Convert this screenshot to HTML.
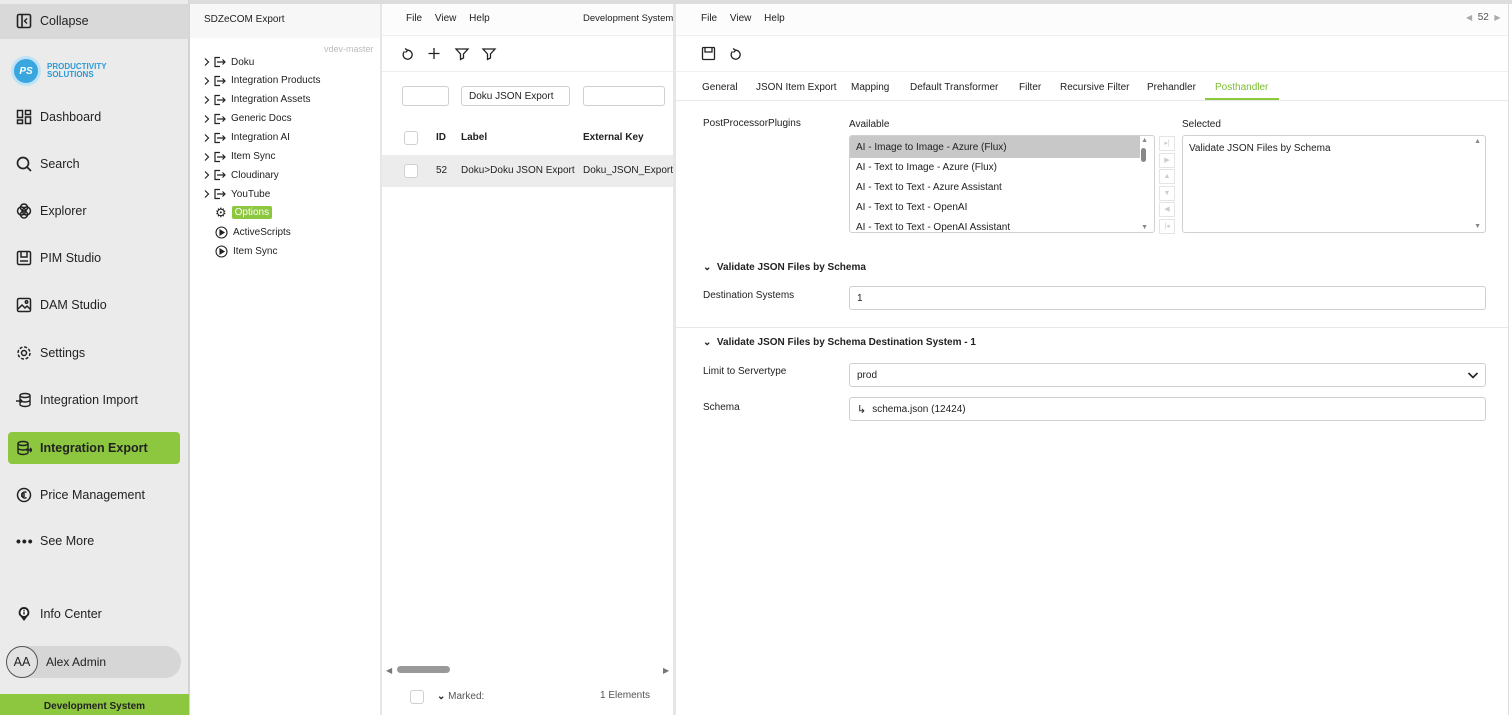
<!DOCTYPE html>
<html><head><meta charset="utf-8"><style>
*{box-sizing:border-box;margin:0;padding:0}
body{width:1512px;height:715px;overflow:hidden;background:#fff;font-family:"Liberation Sans",sans-serif;color:#222;position:relative;font-size:10px}
.abs{position:absolute}
#side{left:0;top:0;width:189px;height:715px;background:#ebebeb;border-right:1px solid #d4d4d4}
.nav{position:absolute;left:16px;font-size:12.5px;color:#222;display:flex;align-items:center;gap:8px}
.nav svg{width:16px;height:16px}
#tree{left:190px;top:0;width:190px;height:715px;background:#fff}
.sep{background:#e6e6e6}
.ti{position:absolute;left:204px;font-size:10px;display:flex;align-items:center;gap:5px}
.chk{position:absolute;width:14px;height:14px;border:1px solid #d0d0d0;border-radius:3px;background:#fff}
.inp{position:absolute;border:1px solid #cfcfcf;border-radius:3px;background:#fff;font-size:10px;padding-left:7px;display:flex;align-items:center}
.tab{position:absolute;top:82px;font-size:10px}
.lbl{position:absolute;left:703px;font-size:10px}
.mv div{height:15px;border:1px solid #e4e4e4;margin-bottom:1.6px}
</style></head><body>
<div class="abs" style="left:0;top:0;width:1512px;height:4px;background:#ddd"></div>
<div id="side" class="abs">
 <div class="abs" style="left:0;top:4px;width:189px;height:35px;background:#d9d9d9"></div>
 <div class="nav" style="top:13px"><svg viewBox="0 0 16 16"><rect x="1.5" y="1.5" width="13" height="13" rx="1.5" fill="none" stroke="#222" stroke-width="1.6"/><line x1="6" y1="2" x2="6" y2="14" stroke="#222" stroke-width="1.6"/><path d="M11 5.5 8.5 8 11 10.5" fill="none" stroke="#222" stroke-width="1.4"/></svg>Collapse</div>
 <div class="abs" style="left:11px;top:56px;width:30px;height:30px;border-radius:50%;background:#3aa6e0;border:3px solid #bfe3f6;color:#fff;font-weight:bold;font-style:italic;font-size:10px;display:flex;align-items:center;justify-content:center">PS</div>
 <div class="abs" style="left:47px;top:63px;color:#2a9ad8;font-weight:bold;font-size:8px;line-height:8px">PRODUCTIVITY<br>SOLUTIONS</div>
 <div class="nav" style="top:109px"><svg viewBox="0 0 16 16" fill="none" stroke="#222" stroke-width="1.5"><rect x="1.5" y="1.5" width="5" height="7"/><rect x="9.5" y="1.5" width="5" height="4"/><rect x="1.5" y="11" width="5" height="3.5"/><rect x="9.5" y="8" width="5" height="6.5"/></svg>Dashboard</div>
 <div class="nav" style="top:156px"><svg viewBox="0 0 16 16" fill="none" stroke="#222" stroke-width="1.7"><circle cx="7" cy="7" r="5.5"/><line x1="11" y1="11" x2="15" y2="15"/></svg>Search</div>
 <div class="nav" style="top:203px"><svg viewBox="0 0 16 16" fill="none" stroke="#222" stroke-width="1.5"><circle cx="5.5" cy="8" r="4"/><circle cx="10.5" cy="8" r="4"/><circle cx="8" cy="4.5" r="3.5"/><circle cx="8" cy="11.5" r="3.5"/></svg>Explorer</div>
 <div class="nav" style="top:250px"><svg viewBox="0 0 16 16" fill="none" stroke="#222" stroke-width="1.5"><rect x="1.5" y="1.5" width="13" height="13" rx="1.5"/><path d="M5 2v5h6V2M4 11h8"/></svg>PIM Studio</div>
 <div class="nav" style="top:297px"><svg viewBox="0 0 16 16" fill="none" stroke="#222" stroke-width="1.5"><rect x="1.5" y="1.5" width="13" height="13" rx="1.5"/><path d="M2 12l4-4 3 3 2-2 3 3"/><circle cx="10.5" cy="5" r="1.2"/></svg>DAM Studio</div>
 <div class="nav" style="top:345px"><svg viewBox="0 0 16 16" fill="none" stroke="#222" stroke-width="1.5"><circle cx="8" cy="8" r="2.5"/><circle cx="8" cy="8" r="6" stroke-dasharray="3 1.7"/></svg>Settings</div>
 <div class="nav" style="top:392px"><svg viewBox="0 0 16 16" fill="none" stroke="#222" stroke-width="1.4"><ellipse cx="9" cy="3.5" rx="5" ry="2"/><path d="M4 3.5v9c0 1 2.2 2 5 2s5-1 5-2v-9M4 8c0 1 2.2 2 5 2s5-1 5-2M0 9h6M4 7l2 2-2 2"/></svg>Integration Import</div>
 <div class="abs" style="left:8px;top:432px;width:172px;height:32px;background:#8dc63f;border-radius:4px"></div>
 <div class="nav" style="top:440px;font-weight:bold"><svg viewBox="0 0 16 16" fill="none" stroke="#222" stroke-width="1.4"><ellipse cx="7" cy="3.5" rx="5" ry="2"/><path d="M2 3.5v9c0 1 2.2 2 5 2s5-1 5-2v-9M2 8c0 1 2.2 2 5 2s5-1 5-2M10 10h6M14 8l2 2-2 2"/></svg>Integration Export</div>
 <div class="nav" style="top:487px"><svg viewBox="0 0 16 16" fill="none" stroke="#222" stroke-width="1.5"><circle cx="8" cy="8" r="6.5"/><path d="M10.5 5.5a3 3 0 1 0 0 5M5 7h4M5 9h4"/></svg>Price Management</div>
 <div class="nav" style="top:534px"><span style="width:16px;letter-spacing:1px;font-weight:bold;font-size:14px;line-height:10px">•••</span>See More</div>
 <div class="nav" style="top:606px"><svg viewBox="0 0 16 16"><path d="M8 1a5.5 5.5 0 0 0-3 10l3 4 3-4A5.5 5.5 0 0 0 8 1z" fill="#222"/><circle cx="8" cy="6.5" r="3.5" fill="#fff"/><rect x="7.3" y="5.5" width="1.4" height="3" fill="#222"/><rect x="7.3" y="3.8" width="1.4" height="1.1" fill="#222"/></svg>Info Center</div>
 <div class="abs" style="left:6px;top:646px;width:175px;height:32px;background:#d6d6d6;border-radius:16px"></div>
 <div class="abs" style="left:6px;top:646px;width:32px;height:32px;border-radius:50%;border:1px solid #555;background:#e2e2e2;font-size:12.5px;display:flex;align-items:center;justify-content:center">AA</div>
 <div class="abs" style="left:46px;top:655px;font-size:12px">Alex Admin</div>
 <div class="abs" style="left:0;top:694px;width:189px;height:21px;background:#8dc63f;font-weight:bold;font-size:10px;text-align:center;padding-top:7px">Development System</div>
</div>
<div class="abs" style="left:189px;top:4px;width:1px;height:711px;background:#d4d4d4"></div>
<div id="tree" class="abs" style="top:4px">
 <div class="abs" style="left:0;top:0;width:190px;height:34px;background:#f7f7f7"></div>
 <div class="abs" style="left:14px;top:10px;font-size:10px">SDZeCOM Export</div>
 <div class="abs" style="left:134px;top:40px;font-size:9px;color:#bbb">vdev-master</div>
</div>
<div id="treeitems"></div>
<div class="abs sep" style="left:380px;top:4px;width:2px;height:711px"></div>
<div class="abs sep" style="left:673px;top:4px;width:3px;height:711px"></div>
<div class="abs" style="left:1508px;top:4px;width:1px;height:711px;background:#ddd"></div>

<!-- middle -->
<div class="abs" style="left:382px;top:4px;width:291px;height:32px;background:#fcfcfc;border-bottom:1px solid #f0f0f0"></div>
<div class="abs" style="left:406px;top:13px;font-size:10px;word-spacing:10px">File View Help</div>
<div class="abs" style="left:583px;top:13px;font-size:9.5px">Development System</div>
<div class="abs" style="left:382px;top:71px;width:291px;height:1px;background:#eee"></div>
<svg class="abs" style="left:401px;top:47px" width="100" height="14" fill="none" stroke="#222" stroke-width="1.3"><path d="M3.5 4.5a4.5 4.5 0 1 0 3-1.3" /><path d="M4 1.5 6.7 3.2 4.5 5.5"/><path d="M33 1v11M27.5 6.5h11"/><path d="M55 2h12l-4.5 5v4l-3 1.5V7z"/><path d="M82 2h12l-4.5 5v4l-3 1.5V7z"/></svg>
<div class="inp" style="left:402px;top:86px;width:47px;height:20px"></div>
<div class="inp" style="left:461px;top:86px;width:109px;height:20px">Doku JSON Export</div>
<div class="inp" style="left:583px;top:86px;width:82px;height:20px"></div>
<div class="chk" style="left:404px;top:131px"></div>
<div class="abs" style="left:436px;top:132px;font-size:10px;font-weight:bold">ID</div>
<div class="abs" style="left:461px;top:132px;font-size:10px;font-weight:bold">Label</div>
<div class="abs" style="left:583px;top:132px;font-size:10px;font-weight:bold">External Key</div>
<div class="abs" style="left:382px;top:155px;width:291px;height:32px;background:#ececec"></div>
<div class="chk" style="left:404px;top:164px"></div>
<div class="abs" style="left:436px;top:165px;font-size:10px">52</div>
<div class="abs" style="left:461px;top:165px;font-size:10px">Doku&gt;Doku JSON Export</div>
<div class="abs" style="left:583px;top:165px;font-size:10px">Doku_JSON_Export</div>
<div class="abs" style="left:386px;top:666px;font-size:8px;color:#777">◀</div>
<div class="abs" style="left:397px;top:666px;width:53px;height:7px;background:#999;border-radius:4px"></div>
<div class="abs" style="left:663px;top:666px;font-size:8px;color:#777">▶</div>
<div class="chk" style="left:410px;top:690px"></div>
<div class="abs" style="left:437px;top:691px;font-size:10px;color:#555"><b style="color:#222">⌄</b> Marked:</div>
<div class="abs" style="left:600px;top:690px;font-size:10px;color:#555">1 Elements</div>

<!-- right -->
<div class="abs" style="left:676px;top:4px;width:832px;height:32px;background:#fcfcfc;border-bottom:1px solid #f0f0f0"></div>
<div class="abs" style="left:701px;top:13px;font-size:10px;word-spacing:10px">File View Help</div>
<div class="abs" style="left:1466px;top:12px;font-size:10px;color:#555"><span style="color:#aaa;font-size:8px">◀</span>&nbsp; 52 &nbsp;<span style="color:#aaa;font-size:8px">▶</span></div>
<svg class="abs" style="left:701px;top:46px" width="45" height="16" fill="none" stroke="#222" stroke-width="1.3"><rect x="1.5" y="1.5" width="12" height="12" rx="1"/><path d="M4 2v4h7V2"/><path d="M31.5 5.5a4.5 4.5 0 1 0 3-1.3"/><path d="M32 2.5 34.7 4.2 32.5 6.5"/></svg>
<div class="abs" style="left:676px;top:71px;width:832px;height:1px;background:#f0f0f0"></div>
<div class="tab" style="left:702px">General</div>
<div class="tab" style="left:756px">JSON Item Export</div>
<div class="tab" style="left:851px">Mapping</div>
<div class="tab" style="left:910px">Default Transformer</div>
<div class="tab" style="left:1019px">Filter</div>
<div class="tab" style="left:1060px">Recursive Filter</div>
<div class="tab" style="left:1147px">Prehandler</div>
<div class="tab" style="left:1215px;color:#7cbd31">Posthandler</div>
<div class="abs" style="left:676px;top:100px;width:832px;height:1px;background:#e8e8e8"></div>
<div class="abs" style="left:1205px;top:98px;width:74px;height:2px;background:#8dc63f"></div>
<div class="lbl" style="top:118px">PostProcessorPlugins</div>
<div class="abs" style="left:849px;top:119px;font-size:10px">Available</div>
<div class="abs" style="left:1182px;top:119px;font-size:10px">Selected</div>
<div class="abs" style="left:849px;top:135px;width:306px;height:98px;border:1px solid #d0d0d0;border-radius:3px;overflow:hidden;font-size:10px">
 <div style="height:22px;background:#c8c8c8;padding:6px 0 0 6px;width:290px">AI - Image to Image - Azure (Flux)</div>
 <div style="height:20px;padding:4px 0 0 6px">AI - Text to Image - Azure (Flux)</div>
 <div style="height:20px;padding:4px 0 0 6px">AI - Text to Text - Azure Assistant</div>
 <div style="height:20px;padding:4px 0 0 6px">AI - Text to Text - OpenAI</div>
 <div style="height:20px;padding:4px 0 0 6px">AI - Text to Text - OpenAI Assistant</div>
 <div class="abs" style="right:8px;top:12px;width:5px;height:14px;background:#888;border-radius:3px"></div>
 <div class="abs" style="right:6px;top:1px;font-size:7px;color:#888">▲</div>
 <div class="abs" style="right:6px;bottom:1px;font-size:7px;color:#888">▼</div>
</div>
<div class="abs mv" style="left:1159px;top:136px;width:16px;height:98px;font-size:7px;color:#ccc;line-height:13px;text-align:center">
 <div>▸|</div><div>▶</div><div>▲</div><div>▼</div><div>◀</div><div style="margin:0">|◂</div>
</div>
<div class="abs" style="left:1182px;top:135px;width:304px;height:98px;border:1px solid #d0d0d0;border-radius:3px;font-size:10px;padding:7px 6px">Validate JSON Files by Schema
 <div class="abs" style="right:4px;top:2px;font-size:7px;color:#888">▲</div><div class="abs" style="right:4px;bottom:2px;font-size:7px;color:#888">▼</div></div>
<div class="abs" style="left:703px;top:262px;font-size:10px;font-weight:bold">⌄&nbsp; Validate JSON Files by Schema</div>
<div class="lbl" style="top:290px">Destination Systems</div>
<div class="inp" style="left:849px;top:286px;width:637px;height:24px">1</div>
<div class="abs" style="left:676px;top:327px;width:832px;height:1px;background:#e8e8e8"></div>
<div class="abs" style="left:703px;top:337px;font-size:10px;font-weight:bold">⌄&nbsp; Validate JSON Files by Schema Destination System - 1</div>
<div class="lbl" style="top:366px">Limit to Servertype</div>
<div class="inp" style="left:849px;top:363px;width:637px;height:24px">prod<svg class="abs" style="right:6px;top:7px" width="12" height="9" fill="none" stroke="#222" stroke-width="1.6"><path d="M1.5 2 6 6.5 10.5 2"/></svg></div>
<div class="lbl" style="top:402px">Schema</div>
<div class="inp" style="left:849px;top:397px;width:637px;height:24px"><span style="font-size:11px;margin-right:6px">↳</span>schema.json (12424)</div>

<script>
var items=["Doku","Integration Products","Integration Assets","Generic Docs","Integration AI","Item Sync","Cloudinary","YouTube"];
var h="";
items.forEach(function(t,i){var y=56+i*18.9;
h+='<div class="ti" style="top:'+y+'px"><svg width="22" height="12" fill="none" stroke="#222" stroke-width="1.2"><path d="M1 2.5 4.5 6 1 9.5"/><path d="M16 1.5H11v9h5M13 6h8M18.5 3.5 21 6l-2.5 2.5"/></svg>'+t+'</div>';});
h+='<div class="ti" style="top:206px;left:215px"><span style="font-size:13px;line-height:12px">⚙</span><span style="background:#8dc63f;color:#fff;padding:1px 3px;border-radius:2px">Options</span></div>';
h+='<div class="ti" style="top:226px;left:215px"><svg width="13" height="13" fill="none" stroke="#222" stroke-width="1.1"><circle cx="6.5" cy="6.5" r="5.5"/><path d="M5 4v5l4-2.5z" fill="#222"/></svg>ActiveScripts</div>';
h+='<div class="ti" style="top:245px;left:215px"><svg width="13" height="13" fill="none" stroke="#222" stroke-width="1.1"><circle cx="6.5" cy="6.5" r="5.5"/><path d="M5 4v5l4-2.5z" fill="#222"/></svg>Item Sync</div>';
document.getElementById("treeitems").innerHTML=h;
</script>
</body></html>
